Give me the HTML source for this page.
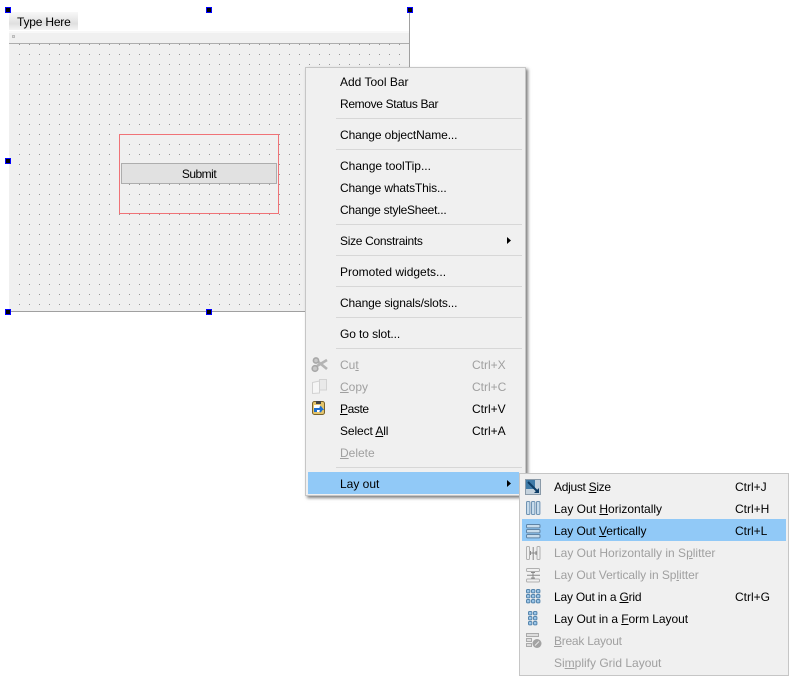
<!DOCTYPE html>
<html><head><meta charset="utf-8"><style>
html,body{margin:0;padding:0;background:#fff}
body{width:806px;height:690px;position:relative;overflow:hidden;font-family:"Liberation Sans",sans-serif;font-size:12px;color:#000}
.a{position:absolute}
.h{position:absolute;width:4px;height:4px;background:#000;border:1px solid #00f}
.t{position:absolute;white-space:nowrap;line-height:16px;height:16px}
.d{color:#a0a0a0}
.s{position:absolute;height:1px;background:#d7d7d7}
u{text-underline-offset:1px}
svg{position:absolute;overflow:visible}
</style></head><body>
<div class="a" style="left:9px;top:31px;width:400px;height:280px;background:#f0f0f0"></div>
<div class="a" style="left:9px;top:31px;width:400px;height:2px;background:#f8f8f8"></div>
<div class="a" style="left:9px;top:43px;width:400px;height:1px;background:#adadad"></div>
<div class="a" style="left:409px;top:10px;width:1px;height:301px;background:#a0a0a0"></div>
<div class="a" style="left:9px;top:311px;width:400px;height:1px;background:#a0a0a0"></div>
<div class="a" style="left:9px;top:12px;width:69px;height:18px;background:linear-gradient(#f8f8f8,#e0e0e0 65%,#f4f4f4)"></div>
<div class="t" style="left:17px;top:14px;letter-spacing:-.2px">Type Here</div>
<svg style="left:0;top:0" width="410" height="312"><defs><pattern id="p" x="9" y="4" width="10" height="10" patternUnits="userSpaceOnUse"><rect x="0" y="0" width="1" height="1" fill="#979797"/></pattern></defs><rect x="10" y="44" width="398" height="266" fill="url(#p)"/><rect x="12.5" y="35.5" width="2" height="2" fill="#ddd" stroke="#bbb" stroke-width="1"/></svg>
<div class="a" style="left:119px;top:134px;width:158px;height:78px;border:1px solid #f07377"></div>
<div class="a" style="left:121px;top:163px;width:154px;height:19px;background:#e1e1e1;border:1px solid #adadad"></div>
<div class="t" style="left:121px;top:166px;width:156px;text-align:center;letter-spacing:-.5px">Submit</div>
<div class="h" style="left:5px;top:7px"></div><div class="h" style="left:206px;top:7px"></div><div class="h" style="left:407px;top:7px"></div>
<div class="h" style="left:5px;top:158px"></div>
<div class="h" style="left:5px;top:309px"></div><div class="h" style="left:206px;top:309px"></div><div class="h" style="left:407px;top:309px"></div>

<div class="a" style="left:305px;top:67px;width:219px;height:427px;background:#f0f0f0;border:1px solid #c6c6c6;box-shadow:2px 2px 3px rgba(0,0,0,.5)"></div>
<div class="a" style="left:308px;top:472px;width:211px;height:22px;background:#91c9f7"></div>
<div class="t" style="left:340px;top:74px">Add Tool Bar</div>
<div class="t" style="left:340px;top:96px;letter-spacing:-.35px">Remove Status Bar</div>
<div class="s" style="left:336px;top:118px;width:186px"></div>
<div class="t" style="left:340px;top:127px;letter-spacing:-.1px">Change objectName...</div>
<div class="s" style="left:336px;top:149px;width:186px"></div>
<div class="t" style="left:340px;top:158px">Change toolTip...</div>
<div class="t" style="left:340px;top:180px;letter-spacing:-.15px">Change whatsThis...</div>
<div class="t" style="left:340px;top:202px;letter-spacing:-.25px">Change styleSheet...</div>
<div class="s" style="left:336px;top:224px;width:186px"></div>
<div class="t" style="left:340px;top:233px;letter-spacing:-.3px">Size Constraints</div>
<svg style="left:507px;top:237px" width="4" height="7"><path d="M0 0L4 3.5L0 7Z" fill="#000"/></svg>
<div class="s" style="left:336px;top:255px;width:186px"></div>
<div class="t" style="left:340px;top:264px">Promoted widgets...</div>
<div class="s" style="left:336px;top:286px;width:186px"></div>
<div class="t" style="left:340px;top:295px;letter-spacing:-.15px">Change signals/slots...</div>
<div class="s" style="left:336px;top:317px;width:186px"></div>
<div class="t" style="left:340px;top:326px;letter-spacing:-.1px">Go to slot...</div>
<div class="s" style="left:336px;top:348px;width:186px"></div>
<div class="t d" style="left:340px;top:357px">Cu<u>t</u></div><div class="t d" style="left:472px;top:357px">Ctrl+X</div>
<div class="t d" style="left:340px;top:379px"><u>C</u>opy</div><div class="t d" style="left:472px;top:379px">Ctrl+C</div>
<div class="t" style="left:340px;top:401px;letter-spacing:-.4px"><u>P</u>aste</div><div class="t" style="left:472px;top:401px">Ctrl+V</div>
<div class="t" style="left:340px;top:423px;letter-spacing:-.1px">Select <u>A</u>ll</div><div class="t" style="left:472px;top:423px">Ctrl+A</div>
<div class="t d" style="left:340px;top:445px"><u>D</u>elete</div>
<div class="s" style="left:336px;top:467px;width:186px"></div>
<div class="t" style="left:340px;top:476px">Lay out</div>
<svg style="left:507px;top:480px" width="4" height="7"><path d="M0 0L4 3.5L0 7Z" fill="#000"/></svg>

<svg style="left:311px;top:357px" width="17" height="16"><path d="M16 3L6 9M16 12L5 3" stroke="#b4b4b4" stroke-width="2.6" fill="none"/><circle cx="5" cy="3.5" r="2.6" fill="#c8c8c8" stroke="#a8a8a8" stroke-width="1.6"/><circle cx="4" cy="11.5" r="2.8" fill="#c8c8c8" stroke="#a8a8a8" stroke-width="1.6"/></svg>
<svg style="left:311px;top:378px" width="17" height="17"><path d="M1.5 4.5L8.5 3V15L1.5 15.5Z" fill="#f6f6f6" stroke="#d2d2d2"/><path d="M8.5 1.5H15.5V12H8.5Z" fill="#e9e9e9" stroke="#d2d2d2"/></svg>
<svg style="left:311px;top:400px" width="16" height="16"><rect x="1.5" y="1.5" width="12" height="13" rx="2" fill="#e3c46b" stroke="#77612a"/><rect x="5" y="1" width="5" height="3" fill="#444"/><rect x="3" y="5" width="6" height="7" fill="#fff"/><path d="M5 9H11L9 6.5M11 9L9 12" stroke="#1d6fd0" stroke-width="2" fill="none"/><rect x="3" y="8" width="3" height="4" fill="#1d6fd0"/></svg>

<div class="a" style="left:519px;top:473px;width:268px;height:201px;background:#f0f0f0;border:1px solid #c6c6c6"></div>
<div class="a" style="left:522px;top:519px;width:264px;height:22px;background:#91c9f7"></div>
<div class="t" style="left:554px;top:479px;letter-spacing:-.3px">Adjust <u>S</u>ize</div><div class="t" style="left:735px;top:479px">Ctrl+J</div>
<div class="t" style="left:554px;top:501px">Lay Out <u>H</u>orizontally</div><div class="t" style="left:735px;top:501px">Ctrl+H</div>
<div class="t" style="left:554px;top:523px;letter-spacing:-.05px">Lay Out <u>V</u>ertically</div><div class="t" style="left:735px;top:523px">Ctrl+L</div>
<div class="t d" style="left:554px;top:545px">Lay Out Horizontally in S<u>p</u>litter</div>
<div class="t d" style="left:554px;top:567px;letter-spacing:-.07px">Lay Out Vertically in Sp<u>l</u>itter</div>
<div class="t" style="left:554px;top:589px;letter-spacing:-.2px">Lay Out in a <u>G</u>rid</div><div class="t" style="left:735px;top:589px">Ctrl+G</div>
<div class="t" style="left:554px;top:611px;letter-spacing:-.06px">Lay Out in a <u>F</u>orm Layout</div>
<div class="t d" style="left:554px;top:633px;letter-spacing:-.25px"><u>B</u>reak Layout</div>
<div class="t d" style="left:554px;top:655px">Si<u>m</u>plify Grid Layout</div>

<svg style="left:525px;top:479px" width="16" height="16"><rect x=".5" y=".5" width="15" height="15" fill="#c4d2dd" stroke="#8a9aa8"/><rect x="1" y="1" width="9" height="9" fill="#3f7ba8"/><path d="M3 3L13 13" stroke="#0d3d66" stroke-width="2"/><path d="M14 9V14H9Z" fill="#0d3d66"/></svg>
<svg style="left:526px;top:501px" width="15" height="15" fill="#c7dcec" stroke="#6f93b3"><rect x=".5" y=".5" width="3.4" height="13" rx="1"/><rect x="5.5" y=".5" width="3.4" height="13" rx="1"/><rect x="10.5" y=".5" width="3.4" height="13" rx="1"/></svg>
<svg style="left:526px;top:524px" width="15" height="15" fill="#c7dcec" stroke="#5f84a6"><rect x=".5" y=".5" width="13.5" height="3.4" rx="1"/><rect x=".5" y="5.5" width="13.5" height="3.4" rx="1"/><rect x=".5" y="10.5" width="13.5" height="3.4" rx="1"/></svg>
<svg style="left:526px;top:546px" width="15" height="15" fill="none" stroke="#b0b0b0"><rect x=".5" y=".5" width="3" height="13" rx="1"/><rect x="11" y=".5" width="3" height="13" rx="1"/><path d="M7.2 1V14M4 7H11" stroke="#888"/><path d="M4.5 5V9M10 5V9" stroke="#888"/></svg>
<svg style="left:526px;top:568px" width="15" height="15" fill="none" stroke="#b0b0b0"><rect x=".5" y=".5" width="13" height="3" rx="1"/><rect x=".5" y="11" width="13" height="3" rx="1"/><path d="M1 7.2H14M7 4V11" stroke="#888"/><path d="M5 4.5H9M5 10H9" stroke="#888"/></svg>
<svg style="left:526px;top:589px" width="15" height="15" fill="#9cc6e8" stroke="#5585ad"><rect x=".5" y=".5" width="3.4" height="3.4" rx="1"/><rect x="5.5" y=".5" width="3.4" height="3.4" rx="1"/><rect x="10.5" y=".5" width="3.4" height="3.4" rx="1"/><rect x=".5" y="5.5" width="3.4" height="3.4" rx="1"/><rect x="5.5" y="5.5" width="3.4" height="3.4" rx="1"/><rect x="10.5" y="5.5" width="3.4" height="3.4" rx="1"/><rect x=".5" y="10.5" width="3.4" height="3.4" rx="1"/><rect x="5.5" y="10.5" width="3.4" height="3.4" rx="1"/><rect x="10.5" y="10.5" width="3.4" height="3.4" rx="1"/></svg>
<svg style="left:528px;top:611px" width="11" height="15" fill="#9cc6e8" stroke="#5585ad"><rect x=".5" y=".5" width="3.4" height="3.4" rx="1"/><rect x="5.5" y=".5" width="3.4" height="3.4" rx="1"/><rect x=".5" y="5.5" width="3.4" height="3.4" rx="1"/><rect x="5.5" y="5.5" width="3.4" height="3.4" rx="1"/><rect x=".5" y="10.5" width="3.4" height="3.4" rx="1"/><rect x="5.5" y="10.5" width="3.4" height="3.4" rx="1"/></svg>
<svg style="left:526px;top:633px" width="16" height="16"><g fill="#ddd" stroke="#aaa"><rect x=".5" y=".5" width="12" height="3"/><rect x=".5" y="5.5" width="5" height="3"/><rect x=".5" y="10.5" width="5" height="3"/></g><circle cx="11" cy="10.5" r="4.5" fill="#a3a3a3"/><path d="M9 12.5L13 8.5" stroke="#e8e8e8"/></svg>
</body></html>
